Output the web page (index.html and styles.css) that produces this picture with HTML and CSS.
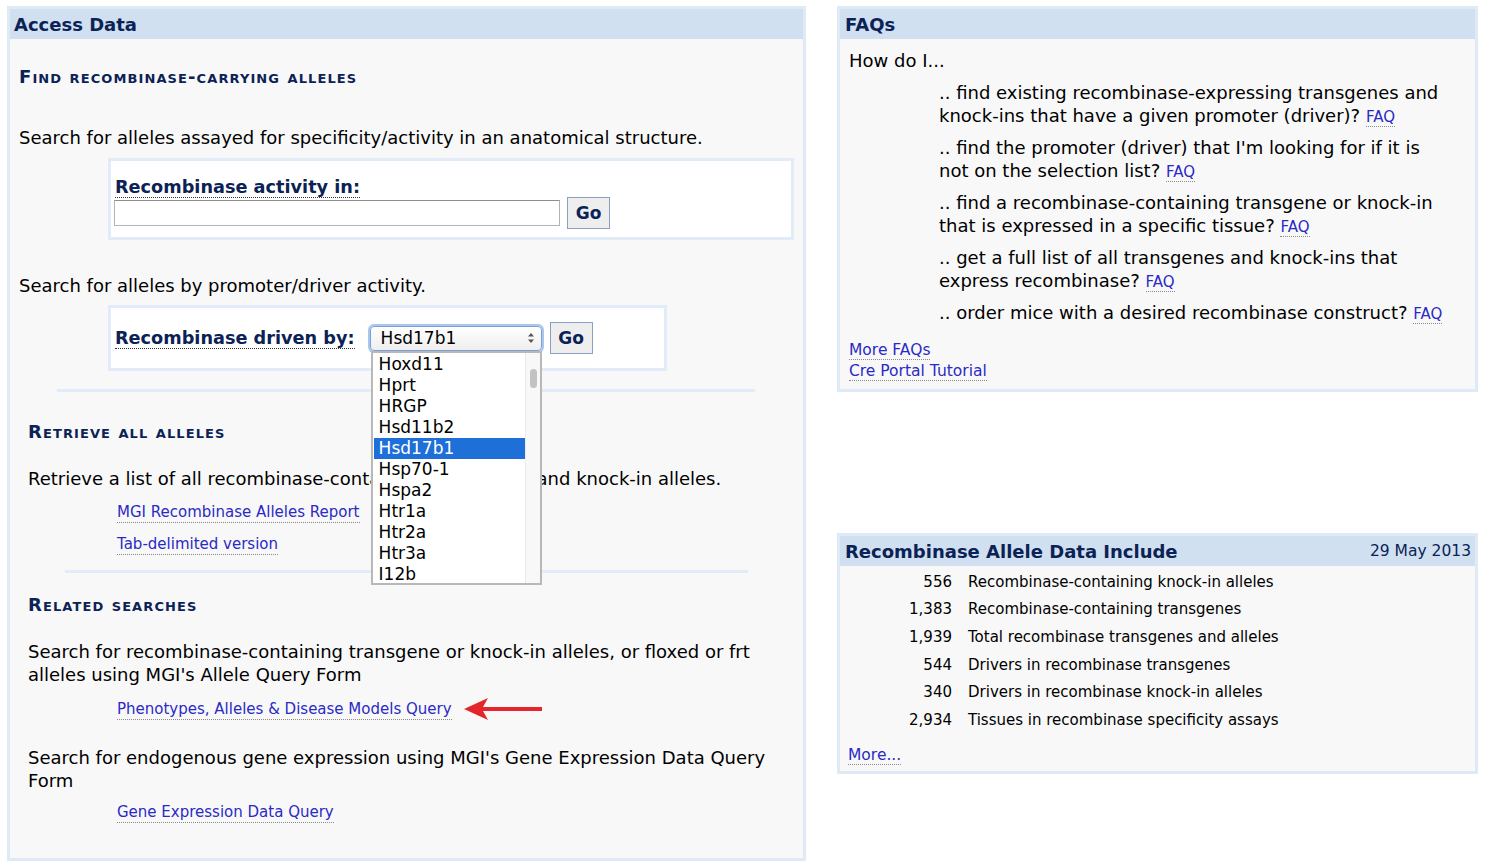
FILE: index.html
```html
<!DOCTYPE html>
<html lang="en">
<head>
<meta charset="utf-8">
<title>Recombinase (cre) Portal</title>
<link rel="stylesheet" href="styles.css">
</head>
<body>
<div class="page">
  <section class="panel panel-main">
    <div class="panel-head"><span class="panel-title">Access Data</span></div>
    <div class="main-body">
      <h2 class="sec sec-first">Find recombinase-carrying alleles</h2>
      <p class="txt txt-a">Search for alleles assayed for specificity/activity in an anatomical structure.</p>
      <div class="formbox formbox-1">
        <div class="lbl lbl-stack"><span class="abbr">Recombinase activity in:</span></div>
        <div class="frow">
          <div class="inp"></div>
          <button class="go go-1">Go</button>
        </div>
      </div>
      <p class="txt txt-b">Search for alleles by promoter/driver activity.</p>
      <div class="formbox formbox-2">
        <div class="lbl"><span class="abbr">Recombinase driven by:</span></div>
        <div class="sel-wrap">
          <div class="sel">
            <span class="sel-val">Hsd17b1</span>
            <svg class="sel-arrows" width="8" height="12" viewBox="0 0 8 12"><path d="M4 1 L7 4.5 H1 Z M4 11 L7 7.5 H1 Z" fill="#555"/></svg>
          </div>
          <div class="droplist">
            <ul class="opts">
              <li>Hoxd11</li>
              <li>Hprt</li>
              <li>HRGP</li>
              <li>Hsd11b2</li>
              <li class="on">Hsd17b1</li>
              <li>Hsp70-1</li>
              <li>Hspa2</li>
              <li>Htr1a</li>
              <li>Htr2a</li>
              <li>Htr3a</li>
              <li>I12b</li>
            </ul>
            <div class="scroll"><div class="thumb"></div></div>
          </div>
        </div>
        <button class="go go-2">Go</button>
      </div>
      <div class="rule rule-1"></div>
      <div class="sub">
        <h2 class="sec sec-2">Retrieve all alleles</h2>
        <p class="txt txt-c">Retrieve a list of all recombinase-containing transgenes and knock-in alleles.</p>
        <div class="lnk-row lnk-1"><a class="lnk" href="#">MGI Recombinase Alleles Report</a></div>
        <div class="lnk-row lnk-2"><a class="lnk" href="#">Tab-delimited version</a></div>
      </div>
      <div class="rule rule-2"></div>
      <div class="sub">
        <h2 class="sec sec-3">Related searches</h2>
        <p class="txt txt-d">Search for recombinase-containing transgene or knock-in alleles, or floxed or frt alleles using MGI's Allele Query Form</p>
        <div class="lnk-row lnk-3">
          <a class="lnk" href="#">Phenotypes, Alleles &amp; Disease Models Query</a>
          <svg class="arrow" width="80" height="24" viewBox="0 0 80 24"><path d="M0 12 L24 1 L19 10 L78 10 L78 14 L19 14 L24 23 Z" fill="#e3262b"/></svg>
        </div>
        <p class="txt txt-e">Search for endogenous gene expression using MGI's Gene Expression Data Query Form</p>
        <div class="lnk-row lnk-4"><a class="lnk" href="#">Gene Expression Data Query</a></div>
      </div>
    </div>
  </section>

  <div class="side">
    <section class="panel panel-faq">
      <div class="panel-head"><span class="panel-title">FAQs</span></div>
      <div class="faq-body">
        <p class="howdo">How do I...</p>
        <ul class="faqs">
          <li><span class="q">.. find existing recombinase-expressing transgenes and knock-ins that have a given promoter (driver)?</span> <a class="lnk faq" href="#">FAQ</a></li>
          <li><span class="q">.. find the promoter (driver) that I'm looking for if it is not on the selection list?</span> <a class="lnk faq" href="#">FAQ</a></li>
          <li><span class="q">.. find a recombinase-containing transgene or knock-in that is expressed in a specific tissue?</span> <a class="lnk faq" href="#">FAQ</a></li>
          <li><span class="q">.. get a full list of all transgenes and knock-ins that express recombinase?</span> <a class="lnk faq" href="#">FAQ</a></li>
          <li><span class="q">.. order mice with a desired recombinase construct?</span> <a class="lnk faq" href="#">FAQ</a></li>
        </ul>
        <div class="more-links">
          <div><a class="lnk" href="#">More FAQs</a></div>
          <div><a class="lnk" href="#">Cre Portal Tutorial</a></div>
        </div>
      </div>
    </section>

    <section class="panel panel-data">
      <div class="panel-head head-split">
        <span class="panel-title">Recombinase Allele Data Include</span>
        <span class="date">29 May 2013</span>
      </div>
      <div class="data-body">
        <div class="drow"><span class="num">556</span><span class="dtxt">Recombinase-containing knock-in alleles</span></div>
        <div class="drow"><span class="num">1,383</span><span class="dtxt">Recombinase-containing transgenes</span></div>
        <div class="drow"><span class="num">1,939</span><span class="dtxt">Total recombinase transgenes and alleles</span></div>
        <div class="drow"><span class="num">544</span><span class="dtxt">Drivers in recombinase transgenes</span></div>
        <div class="drow"><span class="num">340</span><span class="dtxt">Drivers in recombinase knock-in alleles</span></div>
        <div class="drow"><span class="num">2,934</span><span class="dtxt">Tissues in recombinase specificity assays</span></div>
        <div class="more"><a class="lnk" href="#">More...</a></div>
      </div>
    </section>
  </div>
</div>
</body>
</html>
```

FILE: styles.css
```css
* { box-sizing: border-box; }
html, body { margin: 0; padding: 0; background: #ffffff; }
body {
  font-family: "DejaVu Sans", Verdana, sans-serif;
  color: #000;
}
.page {
  display: flex;
  align-items: flex-start;
  gap: 31px;
  padding: 6px 0 0 7px;
}
.panel {
  border: 3px solid #dfeaf7;
  background: #f8f8f8;
}
.panel-head {
  height: 30px;
  background: #d0e0f0;
  display: flex;
  align-items: center;
  padding-left: 5px;
}
.panel-main .panel-head { padding-left: 4px; }
.panel-title {
  font-weight: bold;
  font-size: 18px;
  color: #0b2256;
}
.panel-main { width: 799px; height: 855px; }
.main-body { padding: 0 0 0 9px; }
.sec {
  margin: 0;
  font-size: 18px;
  font-weight: bold;
  font-variant: small-caps;
  color: #0b2256;
  line-height: 20px;
  letter-spacing: 1.1px;
}
.sec-first { margin-top: 28px; }
.txt {
  margin: 0;
  font-size: 18px;
  line-height: 20px;
}
.txt-a { margin-top: 41px; }
.formbox {
  background: #fff;
  border: 3px solid #e1ecf8;
  margin-left: 89px;
}
.formbox-1 {
  width: 686px;
  height: 82px;
  margin-top: 10px;
  padding: 15px 0 0 4px;
}
.lbl {
  font-size: 17.7px;
  font-weight: bold;
  color: #0b2256;
  line-height: 22px;
}
.abbr { border-bottom: 1px dotted #333; }
.frow {
  display: flex;
  align-items: center;
  margin-top: -1px;
}
.inp {
  width: 446px;
  height: 26px;
  margin-left: -1px;
  background: #fff;
  border: 1px solid #b4b4b4;
  border-top-color: #8e8e8e;
}
.go {
  font-family: "DejaVu Sans", Verdana, sans-serif;
  font-weight: bold;
  font-size: 17px;
  color: #0b2256;
  background: #eeeeee;
  border: 1px solid #8a9fc2;
  width: 43px;
  height: 32px;
  padding: 0;
  margin: 0;
}
.go-1 { margin-left: 7px; }
.txt-b { margin-top: 36px; }
.formbox-2 {
  width: 559px;
  height: 66px;
  margin-top: 9px;
  display: flex;
  align-items: center;
  padding: 0 0 0 4px;
}
.sel-wrap { position: relative; margin-left: 15px; }
.sel {
  width: 172px;
  height: 25px;
  border: 1px solid #7b9fd6;
  border-radius: 4px;
  box-shadow: 0 0 0 2px #a9c6ee;
  background: linear-gradient(#ffffff, #eeeeee);
  display: flex;
  align-items: center;
  justify-content: space-between;
  padding: 0 6px 0 10px;
  font-size: 17px;
}
.sel-arrows { display: block; }
.droplist {
  position: absolute;
  left: 1px;
  top: 25px;
  width: 171px;
  height: 234px;
  background: #fff;
  border: 2px solid #b8b8b8;
  display: flex;
  z-index: 5;
  overflow: hidden;
}
.opts {
  list-style: none;
  margin: 0;
  padding: 1px 0 0 1px;
  width: 152px;
  font-size: 17px;
  line-height: 21px;
}
.opts li { padding-left: 5px; height: 21px; white-space: nowrap; }
.opts li.on { background: #1f6fd8; color: #fff; }
.scroll {
  width: 15px;
  background: #f8f8f8;
  border-left: 1px solid #ececec;
  position: relative;
}
.thumb {
  position: absolute;
  left: 4px;
  top: 16px;
  width: 7px;
  height: 19px;
  border-radius: 4px;
  background: #c2c2c2;
}
.go-2 { margin-left: 8px; }
.rule {
  height: 3px;
  background: #e1ecf8;
}
.rule-1 { width: 698px; margin: 18px 0 0 38px; }
.rule-2 { width: 683px; margin: 15px 0 0 46px; }
.sub { padding-left: 9px; }
.sec-2 { margin-top: 30px; }
.txt-c { margin-top: 27px; }
.lnk-row { padding-left: 89px; line-height: 20px; font-size: 15px; display: flex; align-items: center; }
.lnk {
  color: #2a2ac6;
  text-decoration: none;
  border-bottom: 1px dotted #8a8a8a;
}
.lnk-1 { margin-top: 13px; }
.lnk-2 { margin-top: 11px; }
.sec-3 { margin-top: 22px; }
.txt-d { margin-top: 25px; line-height: 23px; width: 750px; }
.lnk-3 { margin-top: 11px; }
.arrow { margin-left: 12px; display: block; }
.txt-e { margin-top: 25px; line-height: 23px; width: 750px; }
.lnk-4 { margin-top: 10px; }

.side { width: 641px; display: flex; flex-direction: column; }
.panel-faq { height: 386px; }
.faq-body { padding: 0 0 0 9px; }
.howdo { margin: 11px 0 0 0; font-size: 18px; line-height: 22px; }
.faqs {
  list-style: none;
  margin: 9px 0 0 90px;
  padding: 0;
  font-size: 18px;
  line-height: 23px;
  width: 508px;
}
.faqs li { margin-bottom: 9px; }
.faqs li:last-child { margin-bottom: 0; }
.faq { font-size: 15px; line-height: 1; }
.more-links { margin-top: 16px; font-size: 15.5px; line-height: 21px; }
.panel-data { margin-top: 141px; height: 241px; }
.head-split { justify-content: space-between; padding-right: 4px; }
.date { font-size: 15.5px; color: #0b2256; }
.data-body { padding: 2px 0 0 0; font-size: 15px; }
.drow { display: flex; height: 27.6px; align-items: center; }
.num { width: 112px; text-align: right; }
.dtxt { margin-left: 16px; }
.more { margin: 11px 0 0 8px; font-size: 15.5px; line-height: 20px; }
```
